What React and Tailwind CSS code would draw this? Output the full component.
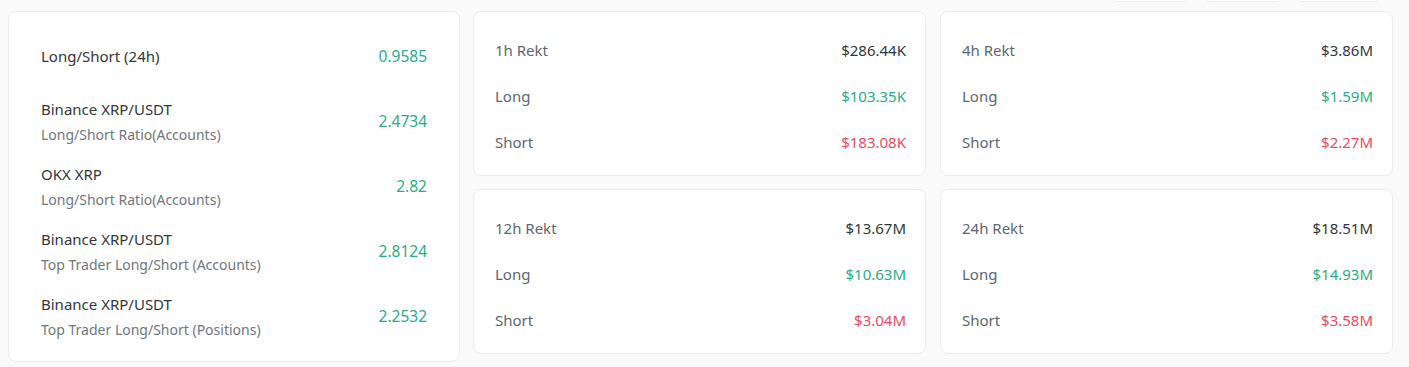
import React from "react";

const ratios = [
  { title: "Long/Short (24h)", value: "0.9585" },
  { title: "Binance XRP/USDT", sub: "Long/Short Ratio(Accounts)", value: "2.4734" },
  { title: "OKX XRP", sub: "Long/Short Ratio(Accounts)", value: "2.82" },
  { title: "Binance XRP/USDT", sub: "Top Trader Long/Short (Accounts)", value: "2.8124" },
  { title: "Binance XRP/USDT", sub: "Top Trader Long/Short (Positions)", value: "2.2532" },
];

const rekt = [
  { label: "1h Rekt", total: "$286.44K", long: "$103.35K", short: "$183.08K" },
  { label: "4h Rekt", total: "$3.86M", long: "$1.59M", short: "$2.27M" },
  { label: "12h Rekt", total: "$13.67M", long: "$10.63M", short: "$3.04M" },
  { label: "24h Rekt", total: "$18.51M", long: "$14.93M", short: "$3.58M" },
];

function RektCard({ item }) {
  return (
    <div className="h-[165px] bg-white border border-[#eaecef] rounded-lg pt-[15px] pl-[21px] pr-[19px]">
      <div className="h-[46px] flex items-center justify-between">
        <span className="text-[#5e6673]">{item.label}</span>
        <span className="text-[#32373e]">{item.total}</span>
      </div>
      <div className="h-[46px] flex items-center justify-between">
        <span className="text-[#5e6673]">Long</span>
        <span className="text-[#2aae85]">{item.long}</span>
      </div>
      <div className="h-[46px] flex items-center justify-between">
        <span className="text-[#5e6673]">Short</span>
        <span className="text-[#ef4a5f]">{item.short}</span>
      </div>
    </div>
  );
}

export default function App() {
  return (
    <div
      className="min-h-screen w-full bg-[#fafafa] pl-2 pr-4 text-[15px]"
      style={{ fontFamily: '"Noto Sans", Arial, sans-serif' }}
    >
      {/* tabs above, mostly cut off */}
      <div className="h-[11px] flex justify-end gap-[21px] pr-[16px]">
        <div className="w-[72px] h-[2px] bg-white border-b border-x border-[#eeeeee] rounded-b" />
        <div className="w-[72px] h-[2px] bg-white border-b border-x border-[#eeeeee] rounded-b" />
        <div className="w-[77px] h-[2px] bg-white border-b border-x border-[#eeeeee] rounded-b" />
      </div>

      <div className="flex gap-[13px]">
        {/* ratios */}
        <div className="w-[452px] h-[351px] shrink-0 bg-white border border-[#eaecef] rounded-lg py-[12px] pl-[32px] pr-[32px]">
          {ratios.map((r, i) => (
            <div key={i} className="h-[65px] flex items-center justify-between">
              <div className="flex flex-col">
                <span className="text-[#32373e] leading-[25px]">{r.title}</span>
                {r.sub && (
                  <span className="text-[14px] text-[#6f7782] leading-[25px]">{r.sub}</span>
                )}
              </div>
              <span className="text-[15.5px] text-[#2aae85]">{r.value}</span>
            </div>
          ))}
        </div>

        {/* rekt */}
        <div className="flex-1 grid grid-cols-2 gap-x-[14px] gap-y-[13px] content-start">
          {rekt.map((item) => (
            <RektCard key={item.label} item={item} />
          ))}
        </div>
      </div>
    </div>
  );
}
